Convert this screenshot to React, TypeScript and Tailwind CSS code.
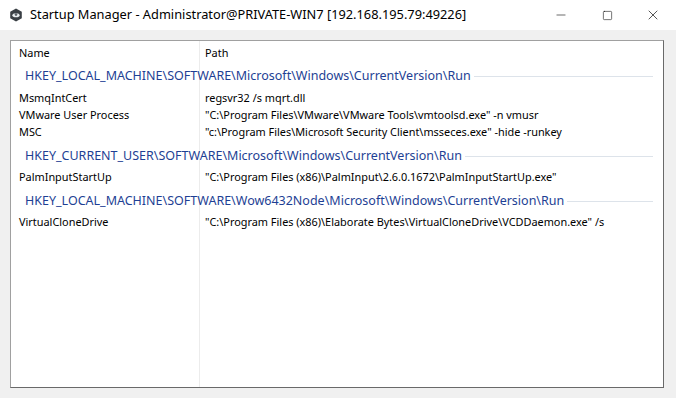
import { Minus, Square, X } from "lucide-react";

const groups = [
  {
    key: "HKEY_LOCAL_MACHINE\\SOFTWARE\\Microsoft\\Windows\\CurrentVersion\\Run",
    rows: [
      ["MsmqIntCert", "regsvr32 /s mqrt.dll"],
      ["VMware User Process", "\"C:\\Program Files\\VMware\\VMware Tools\\vmtoolsd.exe\" -n vmusr"],
      ["MSC", "\"c:\\Program Files\\Microsoft Security Client\\msseces.exe\" -hide -runkey"],
    ],
  },
  {
    key: "HKEY_CURRENT_USER\\SOFTWARE\\Microsoft\\Windows\\CurrentVersion\\Run",
    rows: [["PalmInputStartUp", "\"C:\\Program Files (x86)\\PalmInput\\2.6.0.1672\\PalmInputStartUp.exe\""]],
  },
  {
    key: "HKEY_LOCAL_MACHINE\\SOFTWARE\\Wow6432Node\\Microsoft\\Windows\\CurrentVersion\\Run",
    rows: [["VirtualCloneDrive", "\"C:\\Program Files (x86)\\Elaborate Bytes\\VirtualCloneDrive\\VCDDaemon.exe\" /s"]],
  },
];

function AppIcon() {
  return (
    <svg width="14" height="14" viewBox="0 0 14 14">
      <polygon points="7,0.5 12.8,3.8 12.8,10.2 7,13.5 1.2,10.2 1.2,3.8" fill="#3a3f45" />
      <ellipse cx="7" cy="7.3" rx="3.6" ry="2" fill="#e8ecef" />
      <circle cx="7" cy="6.6" r="1.3" fill="#5a6068" />
    </svg>
  );
}

export default function App() {
  return (
    <div className="w-[676px] h-[398px] bg-[#f0f0f0] flex flex-col overflow-hidden" style={{ fontFamily: "'Noto Sans', 'Noto Sans CJK SC', sans-serif" }}>
      {/* title bar */}
      <div className="h-[30px] bg-white flex items-center shrink-0">
        <div className="pl-[9px] pr-[7px] flex items-center">
          <AppIcon />
        </div>
        <span className="text-[12.8px] text-black">Startup Manager - Administrator@PRIVATE-WIN7 [192.168.195.79:49226]</span>
        <div className="ml-auto flex h-full">
          <div className="w-[46px] flex items-center justify-center">
            <Minus size={14} strokeWidth={1} />
          </div>
          <div className="w-[46px] flex items-center justify-center">
            <Square size={11} strokeWidth={1.2} />
          </div>
          <div className="w-[46px] flex items-center justify-center">
            <X size={16} strokeWidth={1} />
          </div>
        </div>
      </div>

      {/* list view */}
      <div className="mt-[10px] ml-[10px] w-[654px] h-[348px] border border-[#a0a0a0] border-r-[#696969] border-b-[#696969] bg-white relative text-[10.9px] text-black">
        <div className="absolute left-[188px] top-0 bottom-0 w-px bg-[#ececec]" />
        <div className="flex h-[25px] items-center">
          <div className="w-[188px] pl-[8px]">Name</div>
          <div className="pl-[6px]">Path</div>
        </div>
        {groups.map((g, i) => (
          <div key={g.key} className={i === 0 ? "relative" : "relative mt-[5px]"}>
            <div className={i === 0 ? "flex items-center h-[20px] mb-[4px] pl-[14px] pr-[10px]" : "flex items-center h-[20px] mb-[3px] pl-[14px] pr-[10px]"}>
              <span className="text-[12.5px] text-[#1e3f94] whitespace-nowrap">{g.key}</span>
              <div className="flex-1 h-px bg-[#dde3ea] ml-[3px]" />
            </div>
            {g.rows.map((r) => (
              <div key={r[0]} className="flex h-[17px] items-center">
                <div className="w-[188px] pl-[8px] whitespace-nowrap">{r[0]}</div>
                <div className="pl-[6px] whitespace-nowrap">{r[1]}</div>
              </div>
            ))}
          </div>
        ))}
      </div>
    </div>
  );
}
